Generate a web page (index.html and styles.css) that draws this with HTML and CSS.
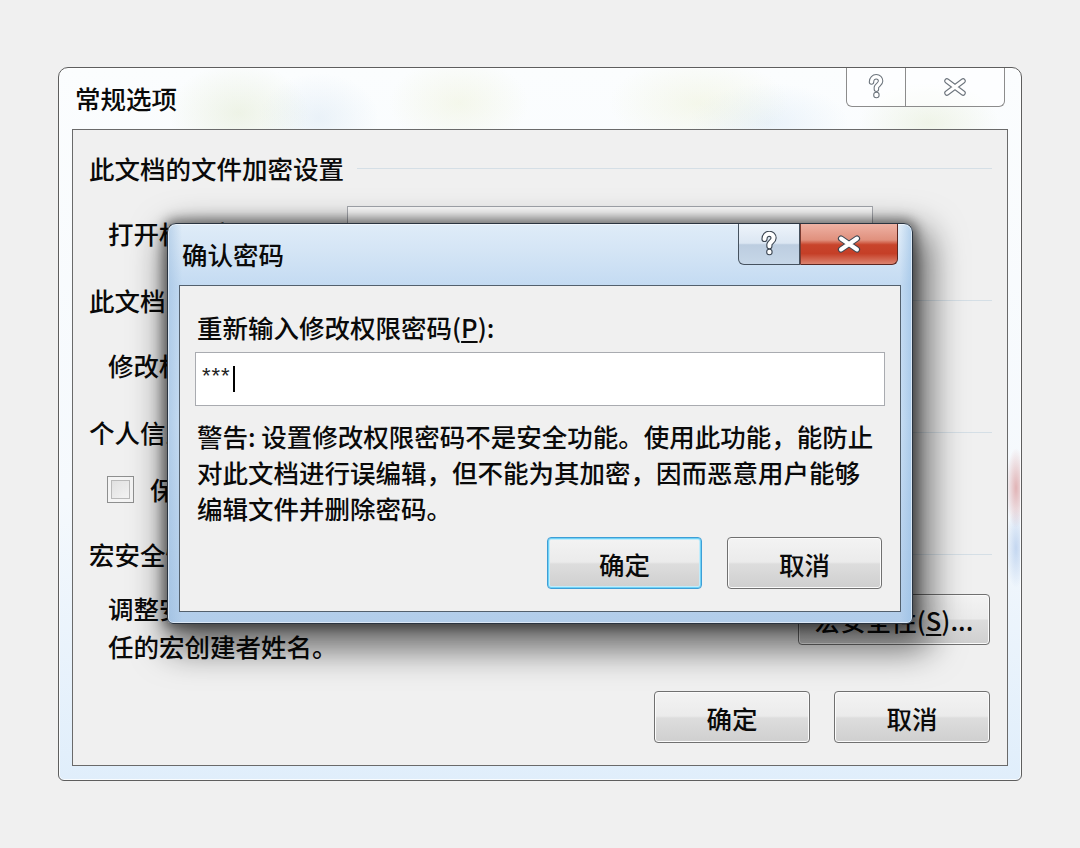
FILE: index.html
```html
<!DOCTYPE html>
<html lang="zh-CN">
<head>
  <meta charset="UTF-8" />
  <title>常规选项</title>
  <link rel="stylesheet" href="styles.css">
</head>
<body>
  <div class="desk">

    <!-- back window: 常规选项 (inactive) -->
    <div class="win outer">
      <div class="titlebar">
        <span class="title">常规选项</span>
        <div class="caps">
          <span class="cap help">
            <svg width="16" height="26" viewBox="0 0 16 26">
              <path class="ol" d="M3.5 8C3.5 4.5 5.8 2.8 8.2 2.8C10.8 2.8 12.6 4.6 12.6 7.1C12.6 10.2 9 10.9 8.4 13.4L8.4 15.2" />
              <circle class="ol" cx="8.4" cy="21" r="1" />
              <path class="fl" d="M3.5 8C3.5 4.5 5.8 2.8 8.2 2.8C10.8 2.8 12.6 4.6 12.6 7.1C12.6 10.2 9 10.9 8.4 13.4L8.4 15.2" />
              <circle class="fl" cx="8.4" cy="21" r="1" />
            </svg>
          </span>
          <span class="cap close">
            <svg width="26" height="20" viewBox="0 0 26 20">
              <path class="ol" d="M5 4L21 16M21 4L5 16" />
              <path class="fl" d="M5 4L21 16M21 4L5 16" />
            </svg>
          </span>
        </div>
      </div>

      <div class="client">
        <div class="group"><span>此文档的文件加密设置</span><i class="rule"></i></div>
        <div class="field">
          <label>打开权限密码(<u>O</u>):</label>
          <span class="box"></span>
        </div>

        <div class="group"><span>此文档的文件共享设置</span><i class="rule"></i></div>
        <div class="field">
          <label>修改权限密码(<u>M</u>):</label>
          <span class="box"></span>
        </div>

        <div class="group"><span>个人信息选项</span><i class="rule"></i></div>
        <div class="check-row">
          <span class="check"></span>
          <span>保存时从文件属性中删除个人信息(<u>R</u>)</span>
        </div>

        <div class="group"><span>宏安全性</span><i class="rule"></i></div>
        <div class="macro-row">
          <p>调整安全级别以打开可能包含宏病毒的文件，并指定可信<br>任的宏创建者姓名。</p>
          <span class="btn wide">宏安全性(<u>S</u>)...</span>
        </div>

        <div class="actions">
          <span class="btn">确定</span>
          <span class="btn">取消</span>
        </div>
      </div>
    </div>

    <!-- front window: 确认密码 (active) -->
    <div class="win inner">
      <div class="titlebar">
        <span class="title">确认密码</span>
        <div class="caps">
          <span class="cap help">
            <svg width="16" height="26" viewBox="0 0 16 26">
              <path class="ol" d="M3.5 8C3.5 4.5 5.8 2.8 8.2 2.8C10.8 2.8 12.6 4.6 12.6 7.1C12.6 10.2 9 10.9 8.4 13.4L8.4 15.2" />
              <circle class="ol" cx="8.4" cy="21" r="1" />
              <path class="fl" d="M3.5 8C3.5 4.5 5.8 2.8 8.2 2.8C10.8 2.8 12.6 4.6 12.6 7.1C12.6 10.2 9 10.9 8.4 13.4L8.4 15.2" />
              <circle class="fl" cx="8.4" cy="21" r="1" />
            </svg>
          </span>
          <span class="cap close">
            <svg width="26" height="20" viewBox="0 0 26 20">
              <path class="ol" d="M5 4.5L21 15.5M21 4.5L5 15.5" />
              <path class="fl" d="M5 4.5L21 15.5M21 4.5L5 15.5" />
            </svg>
          </span>
        </div>
      </div>

      <div class="client">
        <label class="prompt">重新输入修改权限密码(<u>P</u>):</label>
        <div class="pw"><span class="stars">***</span><span class="caret"></span></div>
        <p class="note">警告: 设置修改权限密码不是安全功能。使用此功能，能防止<br>对此文档进行误编辑，但不能为其加密，因而恶意用户能够<br>编辑文件并删除密码。</p>
        <div class="actions">
          <span class="btn default">确定</span>
          <span class="btn">取消</span>
        </div>
      </div>
    </div>

  </div>
</body>
</html>
```

FILE: styles.css
```css
body {
  margin: 0;
  background: #f0f0f0;
  font-family: "Noto Sans CJK SC", "Microsoft YaHei", sans-serif;
  font-size: 25.5px;
  font-weight: 500;
  color: #0a0a0a;
}
u {
  text-decoration: underline;
  text-underline-offset: 3px;
}
.desk {
  position: relative;
  width: 1080px;
  height: 848px;
  overflow: hidden;
}

/* window frames */
.win {
  position: absolute;
  box-sizing: border-box;
  display: flex;
  flex-direction: column;
  border: 1px solid #5e5e5e;
}
.outer {
  left: 58px;
  top: 67px;
  width: 964px;
  height: 714px;
  padding: 0 13px 14px;
  border-radius: 10px 10px 6px 6px;
  background:
    radial-gradient(ellipse 70px 50px at 180px 45px, rgba(205, 218, 170, 0.28), transparent),
    radial-gradient(ellipse 60px 45px at 260px 50px, rgba(185, 210, 232, 0.25), transparent),
    radial-gradient(ellipse 70px 45px at 400px 35px, rgba(225, 230, 180, 0.25), transparent),
    radial-gradient(ellipse 90px 45px at 640px 35px, rgba(228, 232, 185, 0.28), transparent),
    radial-gradient(ellipse 80px 40px at 710px 55px, rgba(185, 212, 238, 0.25), transparent),
    radial-gradient(ellipse 70px 40px at 870px 55px, rgba(210, 222, 175, 0.28), transparent),
    radial-gradient(ellipse 10px 40px at 957px 420px, rgba(205, 110, 110, 0.5), transparent),
    radial-gradient(ellipse 10px 40px at 957px 480px, rgba(140, 175, 225, 0.45), transparent),
    linear-gradient(to bottom, #fbfdfe 0, #f5f9fd 60%, #e0eefb 100%);
  box-shadow: inset 0 0 0 1px rgba(255, 255, 255, 0.8);
}
.inner {
  left: 167px;
  top: 223px;
  width: 746px;
  height: 401px;
  padding: 0 11px 11px;
  border-color: #2a3440;
  border-radius: 9px 9px 6px 6px;
  background:
    linear-gradient(to right, rgba(150, 185, 220, 0.5) 0, transparent 14px, transparent 732px, rgba(150, 190, 228, 0.6) 744px),
    linear-gradient(to bottom, #dfecf8 0, #d3e4f5 30px, #c4dbf2 61px, #c9def3 200px, #b2cdea 100%);
  box-shadow:
    inset 0 0 0 1px rgba(255, 255, 255, 0.55),
    0 0 12px 4px rgba(0, 0, 0, 0.45),
    8px 16px 34px 10px rgba(0, 0, 0, 0.55);
  z-index: 2;
}

.titlebar {
  height: 61px;
  flex-shrink: 0;
  display: flex;
  justify-content: space-between;
  align-items: flex-start;
}
.title {
  margin: 12px 0 0 3px;
  line-height: 36px;
}

/* caption buttons */
.caps {
  display: flex;
  margin-right: 3px;
}
.cap {
  box-sizing: border-box;
  height: 39px;
  display: flex;
  align-items: center;
  justify-content: center;
  border: 1px solid #8c8c8c;
  border-top: none;
}
.cap.help {
  width: 60px;
  border-radius: 0 0 0 6px;
}
.cap.close {
  width: 99px;
  border-left: none;
  border-radius: 0 0 6px 0;
}
.cap svg {
  display: block;
}
.cap .ol {
  fill: none;
  stroke: #6c747c;
  stroke-width: 5.5;
  stroke-linecap: round;
}
.cap .fl {
  fill: none;
  stroke: #ffffff;
  stroke-width: 3.4;
  stroke-linecap: round;
}
.cap circle.ol {
  fill: #6c747c;
  stroke-width: 4.5;
}
.cap circle.fl {
  fill: #fff;
  stroke-width: 2.4;
}
.outer .cap {
  background: rgba(255, 255, 255, 0.55);
}
.inner .cap {
  height: 41px;
  border-color: #46525f;
}
.inner .cap.help {
  width: 62px;
  background: linear-gradient(to bottom, #eef4fb 0, #dbe6f2 48%, #bccde0 52%, #c7d7e8 100%);
}
.inner .cap.close {
  width: 98px;
  border-color: #5c2620;
  border-left: 1px solid #7a3a30;
  background: linear-gradient(to bottom, #eeb2a4 0, #e0907d 40%, #c8442b 52%, #c53f27 74%, #dc836f 100%);
}
.inner .cap .ol {
  stroke: #3d4753;
  stroke-width: 6.2;
}
.inner .cap .fl {
  stroke-width: 4;
}
.inner .cap circle.ol {
  fill: #3d4753;
  stroke-width: 4.5;
}
.inner .cap circle.fl {
  stroke-width: 2.4;
}

/* client areas */
.client {
  flex: 1;
  display: flex;
  flex-direction: column;
  border: 1px solid #6a6a6a;
  background: #f0f0f0;
}
.outer .client {
  padding: 20px 15px 0 16px;
}
.inner .client {
  padding: 23px 15px 22px;
  border-color: #53606d;
}

.group {
  display: flex;
  align-items: center;
  line-height: 36px;
}
.group .rule {
  flex: 1;
  height: 1px;
  margin-left: 13px;
  background: #d5dfe6;
}
.group + .field {
  margin-top: 20px;
}
.field + .group {
  margin-top: 24px;
}
.field {
  display: flex;
  align-items: center;
  padding-left: 19px;
}
.field label {
  width: 239px;
}
.box {
  box-sizing: border-box;
  width: 526px;
  height: 52px;
  border: 1px solid #abadb3;
  border-top-color: #a3a6ad;
  background: #fff;
}

.check-row {
  display: flex;
  align-items: center;
  margin-top: 21px;
  padding-left: 18px;
  line-height: 36px;
}
.check {
  box-sizing: border-box;
  width: 27px;
  height: 27px;
  margin-right: 16px;
  border: 1px solid #8e8f8f;
  background: linear-gradient(135deg, #dcdcdc, #f8f8f8);
  box-shadow: inset 0 0 0 3px #f4f4f4, inset 0 0 0 4px #b9b9b9;
}
.check-row + .group {
  margin-top: 29px;
}
.macro-row {
  display: flex;
  justify-content: space-between;
  align-items: flex-start;
  margin-top: 17px;
  padding-left: 19px;
}
.macro-row p {
  margin: 0;
  line-height: 38px;
  white-space: nowrap;
}

/* push buttons */
.btn {
  box-sizing: border-box;
  width: 156px;
  height: 52px;
  display: flex;
  align-items: center;
  justify-content: center;
  border: 1px solid #707070;
  border-radius: 4px;
  background: linear-gradient(to bottom, #f3f3f3 0, #ebebeb 48%, #dddddd 52%, #cfcfcf 100%);
  box-shadow: inset 0 0 0 1px #fbfbfb;
}
.btn.wide {
  width: 192px;
  height: 51px;
  margin: 5px 2px 0 0;
}
.actions {
  display: flex;
  justify-content: flex-end;
  gap: 24px;
}
.outer .actions {
  margin-top: auto;
  margin-right: 2px;
  padding-bottom: 22px;
}
.inner .actions {
  margin-top: 11px;
  margin-right: 3px;
  gap: 25px;
}
.inner .btn {
  width: 155px;
}
.btn.default {
  border-color: #3e9ed6;
  box-shadow: inset 0 0 0 1px #6fd2f6, inset 0 0 0 2px #c2ecfb;
}

/* password prompt */
.prompt {
  padding-left: 2px;
  line-height: 36px;
}
.pw {
  box-sizing: border-box;
  height: 54px;
  margin-top: 7px;
  display: flex;
  align-items: center;
  padding-left: 6px;
  border: 1px solid #a9abb0;
  background: #fff;
}
.stars {
  font-family: "Liberation Sans", Arial, sans-serif;
  font-size: 22px;
  font-weight: 400;
  letter-spacing: 1px;
  line-height: 26px;
  margin-top: -6px;
  color: #222;
}
.caret {
  width: 2px;
  height: 26px;
  margin-left: 2px;
  background: #000;
}
.note {
  margin: 12px 0 0;
  padding-left: 2px;
  line-height: 36px;
  white-space: nowrap;
}
```
